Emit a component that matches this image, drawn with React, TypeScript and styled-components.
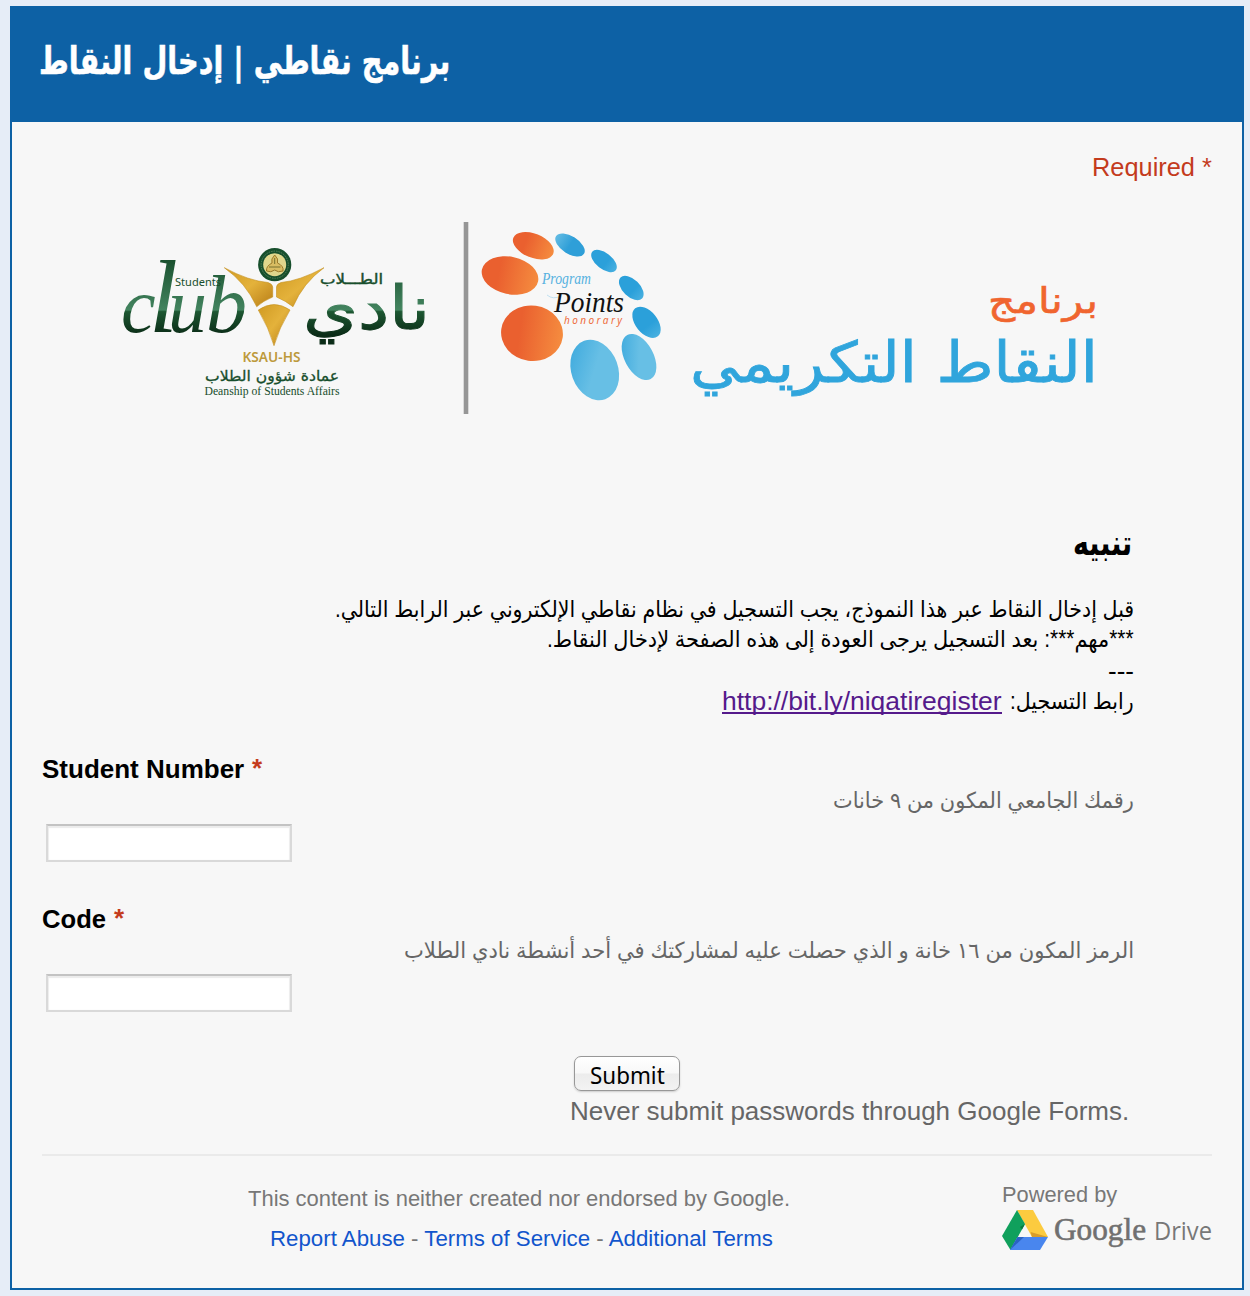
import React, { useLayoutEffect, useRef, useState } from "react";
import styled, { createGlobalStyle } from "styled-components";

const GlobalStyle = createGlobalStyle`
  * { box-sizing: border-box; }
  body {
    margin: 0;
    background: #e6edf7;
    font-family: "Liberation Sans", "DejaVu Sans", sans-serif;
    color: #000;
  }
`;

const Page = styled.div`
  height: 1296px;
  padding: 6px 6px 6px 10px;
`;

const Card = styled.main`
  height: 1284px;
  background: #f7f7f7;
  border: 2px solid #0d61a5;
`;

const Header = styled.header`
  height: 114px;
  padding: 28px 27px;
  background: #0d61a5;
  color: #fff;
`;

const Title = styled.h1`
  margin: 0;
  height: 50px;
  font-size: 38px;
  line-height: 50px;
  font-weight: bold;
  font-family: "DejaVu Sans", sans-serif;
  -webkit-text-stroke: 0.6px #fff;
`;

const Body = styled.div`
  padding: 30px 30px 0;
  display: flex;
  flex-direction: column;
`;

const Line = styled.div<{ $color?: string; $align?: string; $size?: number; $bold?: boolean; $indent?: number; $drop?: number }>`
  display: flex;
  gap: 8px;
  height: 30px;
  line-height: 30px;
  white-space: nowrap;
  margin-top: ${(p) => p.$drop ?? 0}px;
  padding-left: ${(p) => p.$indent ?? 0}px;
  font-size: ${(p) => p.$size ?? 26}px;
  color: ${(p) => p.$color ?? "#000"};
  font-weight: ${(p) => (p.$bold ? "bold" : "normal")};
  justify-content: ${(p) => p.$align ?? "flex-start"};
`;

const FitBox = styled.span`
  display: block;
  white-space: nowrap;
  flex: none;
`;

const FitInner = styled.span`
  display: inline-block;
  transform-origin: 0 50%;
`;

function Fit({ width, children, rtl }: { width: number; children: React.ReactNode; rtl?: boolean }) {
  const ref = useRef<HTMLSpanElement>(null);
  const [scale, setScale] = useState(1);
  useLayoutEffect(() => {
    if (ref.current) setScale(width / ref.current.offsetWidth);
  }, [width]);
  return (
    <FitBox style={{ width }}>
      <FitInner ref={ref} dir={rtl ? "rtl" : "ltr"} style={{ transform: `scaleX(${scale})` }}>
        {children}
      </FitInner>
    </FitBox>
  );
}

const Star = styled.span`
  color: #c43b1d;
  line-height: 28px;
`;

const Banner = styled.svg`
  display: block;
  width: 1000px;
  height: 204px;
  margin: 34px 0 100px 70px;
`;

const RtlBlock = styled.section`
  width: 1092px;
  display: flex;
  flex-direction: column;
  margin-bottom: 38px;
`;

const Notice = styled.h2`
  display: flex;
  justify-content: flex-end;
  margin: 0 2px 28px 0;
  height: 46px;
  line-height: 46px;
  font-family: "DejaVu Sans", sans-serif;
  font-size: 35px;
`;

const Link = styled.a`
  display: block;
  height: 28px;
  color: #551a8b;
  border-bottom: 2px solid #551a8b;
`;

const LinkText = styled.span`
  display: block;
  height: 26px;
  line-height: 31px;
`;

const Field = styled.div`
  width: 1092px;
  height: 150px;
`;

const Input = styled.input`
  display: block;
  width: 246px;
  height: 38px;
  margin: 8px 0 0 4px;
  border: 2px solid #d9d9d9;
  border-top-color: #c3c3c3;
  background: #fff;
  box-shadow: inset 0 2px 1px #ececec, inset 1px 0 1px #eee, inset -1px 0 1px #eee;
  outline: none;
`;

const SubmitRow = styled.div`
  display: flex;
  padding-left: 532px;
  height: 42px;
  padding-top: 2px;
`;

const Submit = styled.button`
  width: 106px;
  height: 35px;
  padding: 4px 0 0;
  border: 1.5px solid #989898;
  border-radius: 7px;
  background: linear-gradient(#fff 0%, #f8f8f8 48%, #ececec 52%, #f3f3f3 100%);
  box-shadow: 0 1px 2px #ccc;
  font: 23px/28px "Noto Sans", sans-serif;
  color: #000;
  display: flex;
  justify-content: center;
`;

const Footer = styled.footer`
  display: flex;
  justify-content: space-between;
  margin-top: 28px;
  border-top: 2px solid #eaeaea;
`;

const Legal = styled.div`
  width: 954px;
  padding-top: 28px;
  display: flex;
  flex-direction: column;
  align-items: center;
  gap: 10px;
  b { font-weight: normal; color: #1155cc; }
`;

const Powered = styled.div`
  width: 210px;
  padding-top: 24px;
`;

const DriveLogo = styled.svg`
  display: block;
  width: 210px;
  height: 40px;
  overflow: visible;
`;

const dots = [
  { cx: 533.3, cy: 245.7, rx: 21.5, ry: 12, r: 22, fill: "url(#orange)" },
  { cx: 510, cy: 275.5, rx: 28.7, ry: 18.7, r: 12, fill: "url(#orange)" },
  { cx: 532, cy: 333.3, rx: 31, ry: 27.7, r: 8, fill: "url(#orange)" },
  { cx: 570, cy: 245, rx: 16.5, ry: 8.8, r: 32, fill: "url(#blue)" },
  { cx: 604, cy: 261, rx: 15, ry: 8, r: 38, fill: "url(#deep)" },
  { cx: 631.3, cy: 288, rx: 15, ry: 8.6, r: 44, fill: "url(#deep)" },
  { cx: 646.5, cy: 322.3, rx: 18, ry: 11, r: 51, fill: "url(#deep)" },
  { cx: 639, cy: 357, rx: 25, ry: 14.5, r: 62, fill: "url(#light)" },
  { cx: 594.7, cy: 370, rx: 31, ry: 23.4, r: 70, fill: "url(#light)" },
];

function ProgramBanner() {
  const fit = "spacingAndGlyphs";
  return (
    <Banner viewBox="112 216 1000 204">
      <defs>
        <linearGradient id="orange"><stop offset=".3" stopColor="#ea602f" /><stop offset="1" stopColor="#f58c3f" /></linearGradient>
        <linearGradient id="blue"><stop offset="0" stopColor="#62bbe3" /><stop offset=".5" stopColor="#2f9fd8" /></linearGradient>
        <linearGradient id="deep"><stop offset=".6" stopColor="#2ba0da" /><stop offset="1" stopColor="#48b0e0" /></linearGradient>
        <linearGradient id="light" x1="0" y1="1" x2="1" y2="0"><stop offset="0" stopColor="#37a6dc" /><stop offset=".5" stopColor="#67bfe5" /></linearGradient>
        <linearGradient id="green" gradientUnits="userSpaceOnUse" x1="0" y1="257" x2="0" y2="335">
          <stop offset="0" stopColor="#174e2c" /><stop offset=".68" stopColor="#43845f" /><stop offset=".7" stopColor="#1d5732" /><stop offset="1" stopColor="#0b2c17" />
        </linearGradient>
        <linearGradient id="gold" x1="0" y1="0" x2="1" y2="1"><stop offset="0" stopColor="#d09a22" /><stop offset=".5" stopColor="#e4b23b" /><stop offset="1" stopColor="#b87d16" /></linearGradient>
      </defs>
      <text x="121 149 168 206" y="332" fontFamily="Liberation Serif" fontStyle="italic" fontSize="78" fill="url(#green)">c<tspan fontSize="104">l</tspan>u<tspan fontSize="82">b</tspan></text>
      <text x="303" y="329" textLength="127" lengthAdjust={fit} fontFamily="DejaVu Sans" fontSize="60" fill="url(#green)" stroke="url(#green)" strokeWidth="1">نادي</text>
      <text x="175" y="286" textLength="46" lengthAdjust={fit} fontFamily="Noto Sans" fontSize="10.5" fill="#174e2c">Students</text>
      <text x="320" y="284" textLength="63" lengthAdjust={fit} fontFamily="DejaVu Sans" fontSize="14" fill="#174e2c" stroke="#174e2c" strokeWidth=".4">الطـــلاب</text>
      <g fill="url(#gold)" stroke="#c4901f" strokeWidth=".6">
        <path d="M224.3 267.7 Q249 281 268 282.5 Q272.5 284 272.7 287 V297 Q263 301 256.7 306.7 Q246 283 224.3 267.7Z" />
        <path d="M324 267.7 Q299 281 281 282.5 Q276.5 284 276.5 287 V297 Q286 301 293 306.7 Q303 283 324 267.7Z" />
        <path d="M258.3 310 Q274 299 290 310 Q279 328 274 345.7 Q269 328 258.3 310Z" />
      </g>
      <circle cx="274.7" cy="264.7" r="16.6" fill="#174f2c" />
      <circle cx="274.7" cy="264.7" r="13.6" fill="none" stroke="#55835c" strokeWidth="1" strokeDasharray="1.5 1" />
      <circle cx="274.7" cy="264.7" r="11.5" fill="#e0d78c" />
      <path d="M274.7 255 Q279 259 277.5 263 Q284 266 283 271 Q278 273 274.7 270 Q271 273 266.5 271 Q266 266 272 263 Q270.5 259 274.7 255Z" fill="#d9bd62" stroke="#9b7a2a" strokeWidth="1" />
      <path d="M269 267H280.5M274.7 258V264" stroke="#77702f" strokeWidth="1" />
      <text x="242.5" y="362" textLength="58" lengthAdjust={fit} fontFamily="Noto Sans" fontWeight="600" fontSize="14" fill="#bd9a3c">KSAU-HS</text>
      <text x="205" y="381" textLength="134" lengthAdjust={fit} fontFamily="DejaVu Sans" fontSize="15" fill="#174e2c" stroke="#174e2c" strokeWidth=".3">عمادة شؤون الطلاب</text>
      <text x="204.5" y="395" textLength="135" lengthAdjust={fit} fontFamily="Liberation Serif" fontSize="12" fill="#174e2c">Deanship of Students Affairs</text>
      <rect x="463.7" y="222" width="4.6" height="192" fill="#969696" />
      {dots.map((d) => (
        <ellipse key={d.cx} cx={d.cx} cy={d.cy} rx={d.rx} ry={d.ry} fill={d.fill} transform={`rotate(${d.r} ${d.cx} ${d.cy})`} />
      ))}
      <text x="542" y="284" textLength="49" lengthAdjust={fit} fontFamily="Liberation Serif" fontStyle="italic" fontSize="16" fill="#55b1df">Program</text>
      <path d="M547 295Q553 300 561 296" fill="none" stroke="#a9d5ec" strokeWidth=".7" />
      <text x="554" y="311.5" textLength="70" lengthAdjust={fit} fontFamily="Liberation Serif" fontStyle="italic" fontSize="30" fill="#111">Points</text>
      <text x="564" y="324" textLength="58" fontFamily="Noto Sans" fontStyle="italic" fontSize="10" fill="#ee6b3a">honorary</text>
      <text x="988" y="313" textLength="110" lengthAdjust={fit} fontFamily="DejaVu Sans" fontSize="36" fill="#f0652f" stroke="#f0652f" strokeWidth=".6">برنامج</text>
      <text x="690" y="382" textLength="408" lengthAdjust={fit} fontFamily="DejaVu Sans" fontSize="56" fill="#30a5dc" stroke="#30a5dc" strokeWidth=".8">النقاط التكريمي</text>
    </Banner>
  );
}

function GoogleDrive() {
  return (
    <DriveLogo viewBox="0 0 210 40">
      <path d="M15 0H31L46 27H30Z" fill="#fccb3f" />
      <path d="M15 0L23 14L8.5 40L0 26Z" fill="#10a05c" />
      <path d="M15.5 27H46L38 40H8Z" fill="#4986ee" />
      <path d="M30 27L28.5 22L46 27Z" fill="#d79d2c" />
      <path d="M23 14L18 17L20 19.5Z" fill="#087b3d" />
      <path d="M15.5 27L22 27L8 40Z" fill="#2b63c4" />
      <text x="52" y="29.5" textLength="92" lengthAdjust="spacingAndGlyphs" fontFamily="Liberation Serif" fontSize="32" fill="#707070" stroke="#707070" strokeWidth=".6">Google</text>
      <text x="152" y="29.5" textLength="58" lengthAdjust="spacingAndGlyphs" fontFamily="Open Sans" fontSize="25" fill="#777">Drive</text>
    </DriveLogo>
  );
}

export default function App() {
  return (
    <Page>
      <GlobalStyle />
      <Card>
        <Header>
          <Title><Fit width={411} rtl>برنامج نقاطي | إدخال النقاط</Fit></Title>
        </Header>
        <Body>
          <Line $color="#c43b1d" $align="flex-end"><Fit width={120}>Required *</Fit></Line>
          <ProgramBanner />
          <RtlBlock>
            <Notice><Fit width={59} rtl>تنبيه</Fit></Notice>
            <Line $size={23} $align="flex-end"><Fit width={799} rtl>قبل إدخال النقاط عبر هذا النموذج، يجب التسجيل في نظام نقاطي الإلكتروني عبر الرابط التالي.</Fit></Line>
            <Line $size={23} $align="flex-end"><Fit width={587} rtl>***مهم***: بعد التسجيل يرجى العودة إلى هذه الصفحة لإدخال النقاط.</Fit></Line>
            <Line $align="flex-end" $drop={2}><Fit width={26}>---</Fit></Line>
            <Line $align="flex-end">
              <Link><LinkText><Fit width={280}>http://bit.ly/niqatiregister</Fit></LinkText></Link>
              <Line as="span" $size={23}><Fit width={124} rtl>رابط التسجيل:</Fit></Line>
            </Line>
          </RtlBlock>
          <Field>
            <Line $bold><Fit width={202}>Student Number</Fit><Star>*</Star></Line>
            <Line $size={22} $color="#666" $align="flex-end" $drop={2}><Fit width={301} rtl>رقمك الجامعي المكون من ٩ خانات</Fit></Line>
            <Input aria-label="Student Number" />
          </Field>
          <Field>
            <Line $bold><Fit width={64}>Code</Fit><Star>*</Star></Line>
            <Line $size={22} $color="#666" $align="flex-end" $drop={2}><Fit width={730} rtl>الرمز المكون من ١٦ خانة و الذي حصلت عليه لمشاركتك في أحد أنشطة نادي الطلاب</Fit></Line>
            <Input aria-label="Code" />
          </Field>
          <SubmitRow><Submit><Fit width={75}>Submit</Fit></Submit></SubmitRow>
          <Line $color="#666" $indent={528}><Fit width={559}>Never submit passwords through Google Forms.</Fit></Line>
          <Footer>
            <Legal>
              <Line $size={22} $color="#777"><Fit width={542}>This content is neither created nor endorsed by Google.</Fit></Line>
              <Line $size={22} $color="#777" $indent={4}><Fit width={503}><b>Report Abuse</b> - <b>Terms of Service</b> - <b>Additional Terms</b></Fit></Line>
            </Legal>
            <Powered>
              <Line $size={22} $color="#777"><Fit width={115}>Powered by</Fit></Line>
              <GoogleDrive />
            </Powered>
          </Footer>
        </Body>
      </Card>
    </Page>
  );
}
